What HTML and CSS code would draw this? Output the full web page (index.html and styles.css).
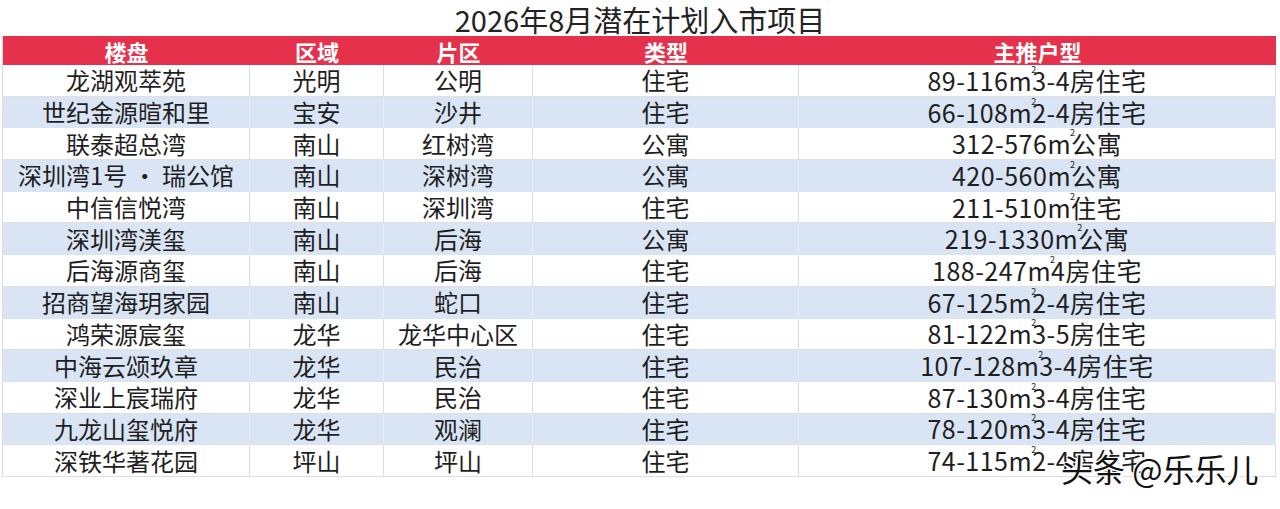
FILE: index.html
```html
<!DOCTYPE html>
<html lang="zh-CN">
<head>
<meta charset="utf-8">
<title>2026年8月潜在计划入市项目</title>
<link rel="stylesheet" href="styles.css">
</head>
<body>
<div class="page">
  <h1 class="title">2026年8月潜在计划入市项目</h1>
  <div class="table">
    <div class="row head">
      <div class="cell">楼盘</div><div class="cell">区域</div><div class="cell">片区</div><div class="cell">类型</div><div class="cell">主推户型</div>
    </div>
    <div class="row">
      <div class="cell">龙湖观萃苑</div><div class="cell">光明</div><div class="cell">公明</div><div class="cell">住宅</div><div class="cell spec">89-116<span class="m2">m<sup>2</sup></span>3-4房住宅</div>
    </div>
    <div class="row alt">
      <div class="cell">世纪金源暄和里</div><div class="cell">宝安</div><div class="cell">沙井</div><div class="cell">住宅</div><div class="cell spec">66-108<span class="m2">m<sup>2</sup></span>2-4房住宅</div>
    </div>
    <div class="row">
      <div class="cell">联泰超总湾</div><div class="cell">南山</div><div class="cell">红树湾</div><div class="cell">公寓</div><div class="cell spec">312-576<span class="m2">m<sup>2</sup></span>公寓</div>
    </div>
    <div class="row alt">
      <div class="cell">深圳湾1号 · 瑞公馆</div><div class="cell">南山</div><div class="cell">深树湾</div><div class="cell">公寓</div><div class="cell spec">420-560<span class="m2">m<sup>2</sup></span>公寓</div>
    </div>
    <div class="row">
      <div class="cell">中信信悦湾</div><div class="cell">南山</div><div class="cell">深圳湾</div><div class="cell">住宅</div><div class="cell spec">211-510<span class="m2">m<sup>2</sup></span>住宅</div>
    </div>
    <div class="row alt">
      <div class="cell">深圳湾渼玺</div><div class="cell">南山</div><div class="cell">后海</div><div class="cell">公寓</div><div class="cell spec">219-1330<span class="m2">m<sup>2</sup></span>公寓</div>
    </div>
    <div class="row">
      <div class="cell">后海源商玺</div><div class="cell">南山</div><div class="cell">后海</div><div class="cell">住宅</div><div class="cell spec">188-247<span class="m2">m<sup>2</sup></span>4房住宅</div>
    </div>
    <div class="row alt">
      <div class="cell">招商望海玥家园</div><div class="cell">南山</div><div class="cell">蛇口</div><div class="cell">住宅</div><div class="cell spec">67-125<span class="m2">m<sup>2</sup></span>2-4房住宅</div>
    </div>
    <div class="row">
      <div class="cell">鸿荣源宸玺</div><div class="cell">龙华</div><div class="cell">龙华中心区</div><div class="cell">住宅</div><div class="cell spec">81-122<span class="m2">m<sup>2</sup></span>3-5房住宅</div>
    </div>
    <div class="row alt">
      <div class="cell">中海云颂玖章</div><div class="cell">龙华</div><div class="cell">民治</div><div class="cell">住宅</div><div class="cell spec">107-128<span class="m2">m<sup>2</sup></span>3-4房住宅</div>
    </div>
    <div class="row">
      <div class="cell">深业上宸瑞府</div><div class="cell">龙华</div><div class="cell">民治</div><div class="cell">住宅</div><div class="cell spec">87-130<span class="m2">m<sup>2</sup></span>3-4房住宅</div>
    </div>
    <div class="row alt">
      <div class="cell">九龙山玺悦府</div><div class="cell">龙华</div><div class="cell">观澜</div><div class="cell">住宅</div><div class="cell spec">78-120<span class="m2">m<sup>2</sup></span>3-4房住宅</div>
    </div>
    <div class="row last">
      <div class="cell">深铁华著花园</div><div class="cell">坪山</div><div class="cell">坪山</div><div class="cell">住宅</div><div class="cell spec">74-115<span class="m2">m<sup>2</sup></span>2-4房住宅</div>
    </div>
  </div>
  <div class="watermark">头条 @乐乐儿</div>
</div>
</body>
</html>
```

FILE: styles.css
```css
* { box-sizing: border-box; }
html, body { margin: 0; padding: 0; background: #ffffff; }
body {
  font-family: "Noto Sans CJK SC", "Noto Sans", sans-serif;
  color: #1e1e1e;
}
.page {
  position: relative;
  width: 1280px;
  height: 509px;
  overflow: hidden;
  background: #fff;
}
.title {
  margin: 0;
  height: 36px;
  padding-top: 2px;
  font-size: 29px;
  font-weight: 400;
  line-height: 34px;
  text-align: center;
  color: #222;
}
.table {
  margin-left: 2px;
  width: 1274px;
  border-left: 1px solid #dcdcdc;
}
.row {
  display: grid;
  grid-template-columns: 247px 134px 149px 266px 477px;
  height: 31.7px;
  border-bottom: 1px solid #e0e0e0;
}
.row.alt { background: #d9e5f5; border-bottom-color: #d9e5f5; }
.row.last { border-bottom: 1px solid #dddddd; }
.cell {
  display: flex;
  align-items: center;
  justify-content: center;
  font-size: 24px;
  line-height: 1;
  white-space: nowrap;
  border-right: 1px solid #dedede;
}
.cell.spec {
  font-size: 25px;
  letter-spacing: 0.5px;
}
.row.alt .cell { border-right-color: #e6edf7; }
.row.head {
  height: 29px;
  background: #e5314b;
  border-bottom: none;
}
.row.head .cell {
  color: #fff;
  font-size: 22px;
  font-weight: 700;
  border-right: none;
}
.m2 { position: relative; }
.m2 sup {
  position: absolute;
  right: -4px;
  top: -3px;
  font-size: 9px;
  line-height: 1;
  letter-spacing: 0;
}
.watermark {
  position: absolute;
  left: 1061px;
  top: 449px;
  font-size: 32px;
  line-height: 38px;
  color: #111;
  text-shadow: 2px 2px 0 #fff, -1px -1px 0 #fff, 1px -1px 0 #fff, -1px 1px 0 #fff, 2px 0 0 #fff;
}
```
